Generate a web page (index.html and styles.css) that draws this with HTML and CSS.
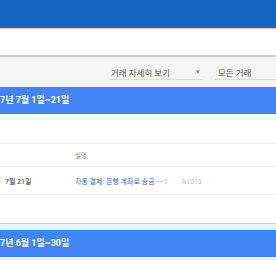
FILE: index.html
```html
<!DOCTYPE html>
<html lang="ko">
  <head>
    <meta charset="UTF-8" />
    <title>거래</title>
    <link rel="stylesheet" href="styles.css">
  </head>
  <body>
    <div class="appbar"></div>
    <div class="subbar"></div>

    <div class="toolbar">
      <div class="select select-detail">
        <span>거래 자세히 보기</span>
        <span class="caret">▾</span>
      </div>
      <div class="select select-type">
        <span>모든 거래</span>
      </div>
    </div>

    <div class="period">7년 7월 1일~21일</div>
    <div class="section">
      <div class="blank"></div>
      <div class="row head">
        <div class="col-date"></div>
        <div class="col-desc">설명</div>
      </div>
      <div class="row">
        <div class="col-date">7월 21일</div>
        <div class="col-desc">
          <a class="link">자동 결제: 은행 계좌로 송금 ····<span class="faded">5</span><span class="tail">A1013</span></a>
        </div>
      </div>
      <div class="blank last"></div>
    </div>

    <div class="gap"></div>
    <div class="period">7년 6월 1일~30일</div>
  </body>
</html>
```

FILE: styles.css
```css
body {
  margin: 0;
  width: 276px;
  overflow: hidden;
  background: #f1f1f1;
  font-family: Roboto, "Noto Sans CJK KR", sans-serif;
}

.appbar {
  height: 28px;
  background: #1565c0;
  border-bottom: 1px solid #c9c9c9;
}

.subbar {
  height: 26px;
  background: #fff;
  border-bottom: 2px solid #cfcfcf;
}

.toolbar {
  display: flex;
  align-items: flex-end;
  height: 30px;
  padding-left: 110px;
  padding-bottom: 7px;
  gap: 12px;
  background: #f5f5f5;
  box-sizing: border-box;
}

.select {
  display: flex;
  justify-content: space-between;
  align-items: center;
  height: 16px;
  font-size: 8.5px;
  color: #555;
  border-bottom: 1px solid #dedede;
  padding-left: 1px;
  box-sizing: border-box;
}

.select-detail {
  width: 93px;
}

.select-type {
  flex: 1;
  padding-left: 3px;
}

.caret {
  font-size: 7px;
  color: #888;
  padding-right: 3px;
}

.period {
  height: 27px;
  line-height: 27px;
  background: #4285f4;
  color: #fff;
  font-size: 9px;
  font-weight: 700;
}

.section {
  background: #fff;
  border-bottom: 1px solid #cccccc;
}

.blank {
  height: 29px;
}

.blank.last {
  height: 28px;
}

.row {
  display: grid;
  grid-template-columns: 75px 1fr;
  align-items: center;
  height: 27px;
  border-top: 1px solid #ececec;
  font-size: 7px;
  color: #333;
}

.row.head {
  height: 22px;
  font-size: 6.5px;
  color: #999;
}

.col-date {
  padding-left: 5px;
}

.row + .blank {
  border-top: 1px solid #ececec;
}

.link {
  color: #3367d6;
}

.faded {
  color: #b9c9f0;
}

.tail {
  color: #a9bdef;
  padding-left: 14px;
}

.gap {
  height: 6px;
}
```
